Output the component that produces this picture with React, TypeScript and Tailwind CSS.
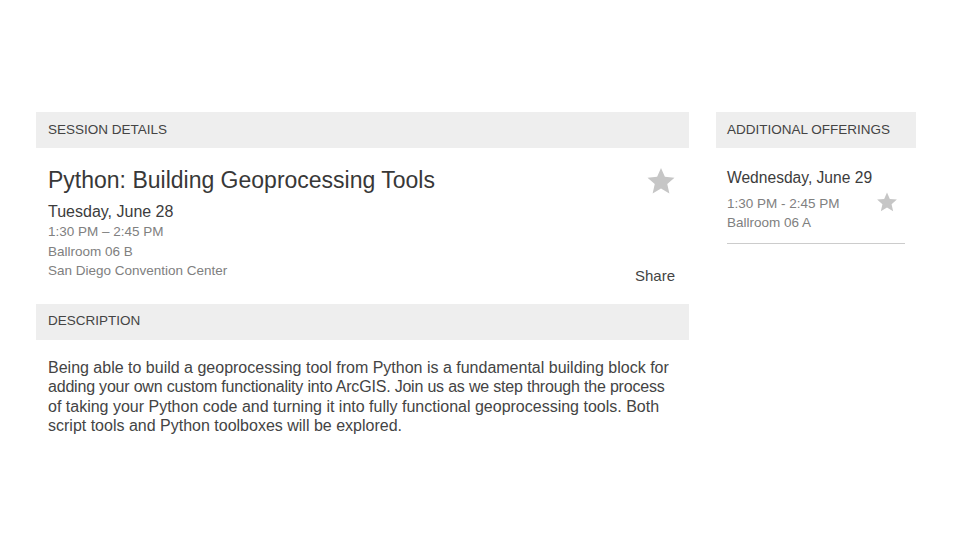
function Star({ className }: { className: string }) {
  return (
    <svg viewBox="0 0 24 24" className={className} fill="currentColor">
      <path d="M12 1.5l3.1 7.1 7.7.7-5.8 5.1 1.7 7.6L12 18l-6.7 4 1.7-7.6-5.8-5.1 7.7-.7z" />
    </svg>
  );
}

function SectionHeader({ label }: { label: string }) {
  return (
    <div className="h-[36px] bg-[#eeeeee] px-[12px] flex items-center text-[13.5px] text-[#444] uppercase">
      {label}
    </div>
  );
}

const description = [
  'Being able to build a geoprocessing tool from Python is a fundamental building block for',
  'adding your own custom functionality into ArcGIS. Join us as we step through the process',
  'of taking your Python code and turning it into fully functional geoprocessing tools. Both',
  'script tools and Python toolboxes will be explored.',
];

export default function App() {
  return (
    <div
      className="w-[960px] h-[540px] bg-white flex gap-[27px] pt-[112px] pl-[36px]"
      style={{ fontFamily: '"Liberation Sans", Arial, sans-serif' }}
    >
      {/* Main column */}
      <div className="w-[653px]">
        <SectionHeader label="Session Details" />
        <div className="flex justify-between pl-[12px] pr-[14px] pt-[19px] pb-[23px]">
          <div>
            <h1 className="text-[23px] leading-[26px] text-[#383838]">Python: Building Geoprocessing Tools</h1>
            <div className="mt-[9px] text-[16px] leading-[20px] text-[#3c3c3c]">Tuesday, June 28</div>
            <div className="text-[13.5px] leading-[19.5px] text-[#808080]">
              <div>1:30 PM – 2:45 PM</div>
              <div>Ballroom 06 B</div>
              <div>San Diego Convention Center</div>
            </div>
          </div>
          <div className="flex flex-col items-end justify-between">
            <Star className="w-[30px] h-[30px] text-[#c6c6c6] -mt-[1px] mr-[-1px]" />
            <span className="text-[15px] leading-[20px] text-[#444] mb-[-5px]">Share</span>
          </div>
        </div>
        <SectionHeader label="Description" />
        <p className="px-[12px] pt-[18px] text-[16px] leading-[19.5px] text-[#444] whitespace-nowrap">
          {description.map((line, i) => (
            <span key={line} className={i === 1 ? 'block tracking-[-0.2px]' : 'block'}>
              {line}
            </span>
          ))}
        </p>
      </div>

      {/* Side column */}
      <div className="w-[200px]">
        <div className="h-[36px] bg-[#eeeeee] px-[11px] flex items-center text-[13.5px] text-[#444] uppercase">
          Additional Offerings
        </div>
        <div className="mx-[11px] pt-[20px] pb-[11px] border-b border-[#cccccc]">
          <div className="text-[15.6px] leading-[20px] text-[#3c3c3c]">Wednesday, June 29</div>
          <div className="flex justify-between items-start mt-[6px]">
            <div className="text-[13.5px] leading-[19px] text-[#808080]">
              <div>1:30 PM - 2:45 PM</div>
              <div>Ballroom 06 A</div>
            </div>
            <Star className="w-[22px] h-[22px] text-[#c6c6c6] mt-[-3px] mr-[7px]" />
          </div>
        </div>
      </div>
    </div>
  );
}
